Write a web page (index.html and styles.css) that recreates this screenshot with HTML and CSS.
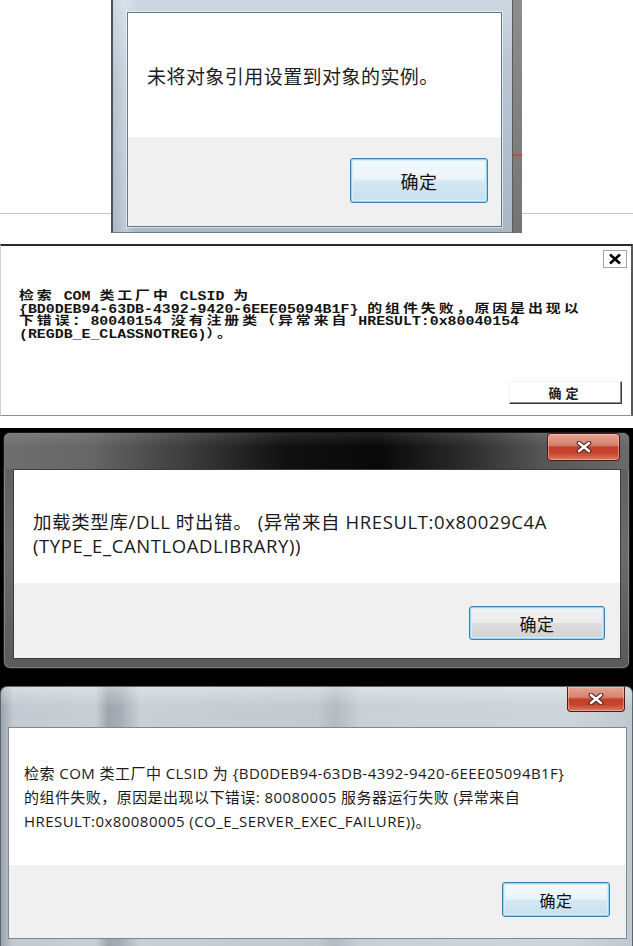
FILE: index.html
```html
<!DOCTYPE html>
<html lang="zh-CN">
<head>
<meta charset="utf-8">
<title>错误对话框</title>
<link rel="stylesheet" href="styles.css">
</head>
<body>
<div class="page">

  <section class="s1">
    <div class="win1">
      <div class="w1-frame">
        <div class="w1-inner">
          <div class="w1-content"><p class="msg1">未将对象引用设置到对象的实例。</p></div>
          <div class="w1-foot"><div class="btn7 btn1">确定</div></div>
        </div>
      </div>
      <div class="w1-strip"></div>
    </div>
  </section>

  <section class="s2">
    <div class="s2-top">
      <div class="x2">
        <svg width="14" height="12" viewBox="0 0 14 12"><path d="M2 1.5L12 10.5M12 1.5L2 10.5" stroke="#000" stroke-width="2.6"/></svg>
      </div>
    </div>
    <div class="msg2">
      <div class="ln2"><span class="cj">检索</span> COM <span class="cj">类工厂中</span> CLSID <span class="cj">为</span></div>
      <div class="ln2">{BD0DEB94-63DB-4392-9420-6EEE05094B1F} <span class="cj">的组件失败，原因是出现以</span></div>
      <div class="ln2"><span class="cj">下错误：</span>80040154 <span class="cj">没有注册类（异常来自</span> HRESULT:0x80040154</div>
      <div class="ln2">(REGDB_E_CLASSNOTREG)<span class="cj">）。</span></div>
    </div>
    <div class="s2-foot"><div class="btn2">确定</div></div>
  </section>

  <section class="s3">
    <div class="win3">
      <div class="t3">
        <div class="close7 close3">
          <svg width="18" height="12" viewBox="0 0 18 12"><path d="M4 2L14 10M14 2L4 10" stroke="#4a1e14" stroke-width="4.6" stroke-linecap="round"/><path d="M4 2L14 10M14 2L4 10" stroke="#fff" stroke-width="2.6" stroke-linecap="round"/></svg>
        </div>
      </div>
      <div class="w3-inner">
        <div class="w3-content">
          <div class="ln3">加载类型库/DLL 时出错。 (异常来自 HRESULT:0x80029C4A</div>
          <div class="ln3">(TYPE_E_CANTLOADLIBRARY))</div>
        </div>
        <div class="w3-foot"><div class="btn7 btn3">确定</div></div>
      </div>
    </div>
  </section>

  <section class="s4">
    <div class="win4">
      <div class="t4">
        <div class="close7 close4">
          <svg width="18" height="12" viewBox="0 0 18 12"><path d="M4 2L14 10M14 2L4 10" stroke="#4a1e14" stroke-width="4.6" stroke-linecap="round"/><path d="M4 2L14 10M14 2L4 10" stroke="#fff" stroke-width="2.6" stroke-linecap="round"/></svg>
        </div>
      </div>
      <div class="w4-inner">
        <div class="w4-content">
          <div class="ln4">检索 COM 类工厂中 CLSID 为 {BD0DEB94-63DB-4392-9420-6EEE05094B1F}</div>
          <div class="ln4">的组件失败，原因是出现以下错误: 80080005 服务器运行失败 (异常来自</div>
          <div class="ln4">HRESULT:0x80080005 (CO_E_SERVER_EXEC_FAILURE))。</div>
        </div>
        <div class="w4-foot"><div class="btn7 btn4">确定</div></div>
      </div>
    </div>
  </section>

</div>
</body>
</html>
```
FILE: styles.css
```css
* { box-sizing: border-box; margin: 0; padding: 0; }

body {
  margin: 0;
  background: #fff;
  font-family: "Noto Sans CJK SC", "Noto Sans", sans-serif;
  color: #1a1a1a;
}

.page { width: 633px; height: 946px; overflow: hidden; }

/* ---------- panel 1 ---------- */
.s1 {
  height: 233px;
  padding-left: 111px;
  display: flex;
  background: linear-gradient(to bottom, transparent 213px, #c6c6c6 213px, #c6c6c6 214px, transparent 214px);
}
.win1 { width: 411px; height: 233px; display: flex; }
.w1-frame {
  flex: 1;
  display: flex;
  border-left: 2px solid #4f5256;
  border-bottom: 1px solid #6f7a84;
  padding: 12px 10px 5px 14px;
  background:
    linear-gradient(90deg, rgba(255,255,255,0) 0, rgba(255,255,255,.25) 3%, rgba(255,255,255,0) 6%),
    linear-gradient(to bottom, #cdd8e3 0, #b9c6d2 30%, #aab8c5 100%);
}
.w1-inner {
  flex: 1;
  display: flex;
  flex-direction: column;
  background: #fff;
  border: 1px solid #65788b;
  box-shadow: 0 0 0 1px rgba(255,255,255,.55);
}
.w1-content { height: 124px; padding: 50px 0 0 19px; }
.msg1 { font-size: 19px; letter-spacing: 0.45px; line-height: 26px; color: #1c1c1c; white-space: nowrap; }
.w1-foot {
  flex: 1;
  background: #f0f0f0;
  display: flex;
  justify-content: flex-end;
  align-items: flex-start;
  padding: 21px 13px 0 0;
}
.btn1 { width: 138px; height: 45px; font-size: 18px; }
.w1-strip {
  width: 10px;
  border-left: 1px solid #5a5a5a;
  background: linear-gradient(to bottom, #8d8d8d 0, #7d7d7d 154px, #c64a3c 154px, #c64a3c 156px, #7d7d7d 156px, #747474 100%);
}

/* generic win7 button */
.btn7 {
  display: flex;
  align-items: center;
  justify-content: center;
  border: 1px solid #3c7fb1;
  border-radius: 3px;
  box-shadow: inset 0 0 0 1px #8fd6f7, inset 0 0 0 2px #d4eefa;
  background: linear-gradient(#f4fafd 0, #e9f4fa 49%, #d4e8f3 51%, #c8e1ee 100%);
  color: #111;
  letter-spacing: 0.5px;
}

/* ---------- panel 2 ---------- */
.s2 {
  margin-top: 11px;
  height: 172px;
  display: flex;
  flex-direction: column;
  border-top: 2px solid #2b2b2b;
  border-bottom: 1px solid #8e8e8e;
  border-left: 1px solid #d0d0d0;
  border-right: 2px solid #575757;
  background: #fff;
}
.s2-top { display: flex; justify-content: flex-end; padding: 4px 4px 0 0; }
.x2 {
  width: 24px;
  height: 18px;
  border: 1px solid #a5a5a5;
  background: #fff;
  display: flex;
  align-items: center;
  justify-content: center;
}
.msg2 {
  margin: 23px 0 0 18px;
  font-family: "Liberation Mono", "Noto Sans CJK SC", monospace;
  font-weight: 700;
  font-size: 12px;
  line-height: 12.5px;
  color: #141414;
  transform: scaleX(1.24);
  transform-origin: 0 0;
}
.ln2 { white-space: nowrap; height: 12.5px; }
.cj { letter-spacing: 2.4px; }
.s2-foot { display: flex; justify-content: flex-end; margin-top: 40px; padding-right: 9px; }
.btn2 {
  width: 113px;
  height: 23px;
  display: flex;
  align-items: center;
  justify-content: center;
  border: 1px solid;
  border-color: #f4f4f4 #3a3a3a #3a3a3a #f4f4f4;
  box-shadow: inset -1px -1px 0 #8a8a8a;
  background: #fff;
  font-family: "Noto Sans CJK SC", serif;
  font-weight: 700;
  font-size: 13px;
  letter-spacing: 4px;
  color: #222;
}

/* ---------- panel 3 ---------- */
.s3 {
  margin-top: 12px;
  height: 258px;
  background: #000;
  padding: 4px 3px 0 3px;
}
.win3 {
  height: 237px;
  display: flex;
  flex-direction: column;
  border: 1px solid #1a1a1a;
  border-radius: 7px;
  box-shadow: inset 0 0 0 1px rgba(255,255,255,.22);
  background: linear-gradient(to bottom, #5c5c5c 0, #6b6b6b 50%, #5a5a5a 100%);
  overflow: hidden;
}
.t3 {
  height: 36px;
  display: flex;
  justify-content: flex-end;
  padding-right: 9px;
  background:
    linear-gradient(to bottom, rgba(255,255,255,.10), rgba(255,255,255,0) 14px),
    linear-gradient(90deg, #6e6e6e 0, #666 14%, #3a3a3a 30%, #101010 45%, #080808 60%, #2c2c2c 74%, #555 86%, #6a6a6a 100%);
}
.close7 {
  display: flex;
  align-items: center;
  justify-content: center;
  border: 1px solid #4c1b12;
  box-shadow: inset 0 0 0 1px rgba(255,210,200,.45);
  background: linear-gradient(to bottom, #e6a595 0, #d7826f 42%, #c2402a 52%, #c6452d 74%, #dc7d63 100%);
}
.close3 { width: 73px; height: 28px; border-radius: 4px; }
.w3-inner {
  flex: 1;
  margin: 0 8px 9px 9px;
  display: flex;
  flex-direction: column;
  border: 1px solid #3c3c3c;
  background: #fff;
}
.w3-content { height: 113px; padding: 40px 0 0 19px; }
.ln3 {
  font-family: "Open Sans", "Noto Sans CJK SC", sans-serif;
  font-size: 18.5px;
  letter-spacing: 0.6px;
  line-height: 24px;
  white-space: nowrap;
  color: #1a1a1a;
}
.w3-foot {
  flex: 1;
  background: #f0f0f0;
  display: flex;
  justify-content: flex-end;
  align-items: flex-start;
  padding: 23px 15px 0 0;
}
.btn3 {
  width: 136px;
  height: 34px;
  font-size: 17px;
  background: linear-gradient(#f3f3f3 0, #ececec 49%, #dedede 51%, #d2d2d2 100%);
}

/* ---------- panel 4 ---------- */
.s4 { height: 260px; background: #000; }
.win4 {
  height: 260px;
  display: flex;
  flex-direction: column;
  border: 1px solid #5d666f;
  border-bottom: none;
  border-radius: 7px 7px 0 0;
  overflow: hidden;
  background:
    linear-gradient(90deg, #9aa4ad 0, #c3cad1 2%, #c8ced4 15%, #9ea6ad 17%, #a6aeb5 19%, #c9cfd5 22%, #c2c9cf 50%, #b3bbc3 53%, #c9d0d6 57%, #cdd4da 90%, #c1c9d0 100%);
}
.t4 {
  height: 40px;
  display: flex;
  justify-content: flex-end;
  padding-right: 7px;
  background: linear-gradient(to bottom, rgba(255,255,255,.35), rgba(255,255,255,0) 20px);
}
.close4 { width: 58px; height: 25px; border-top: none; border-radius: 0 0 4px 4px; }
.w4-inner {
  flex: 1;
  margin: 0 5px 7px 7px;
  display: flex;
  flex-direction: column;
  border: 1px solid #7b8895;
  background: #fff;
}
.w4-content { height: 137px; padding: 33px 0 0 15px; }
.ln4 {
  font-family: "Open Sans", "Noto Sans CJK SC", sans-serif;
  font-size: 15px;
  letter-spacing: 0.45px;
  line-height: 24px;
  white-space: nowrap;
  color: #1a1a1a;
}
.w4-foot {
  flex: 1;
  background: #f0f0f0;
  display: flex;
  justify-content: flex-end;
  align-items: flex-start;
  padding: 17px 16px 0 0;
}
.btn4 { width: 108px; height: 35px; font-size: 16px; }
```
